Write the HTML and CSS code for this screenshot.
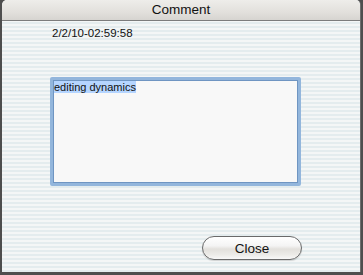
FILE: index.html
```html
<!DOCTYPE html>
<html>
<head>
<meta charset="utf-8">
<link rel="stylesheet" href="styles.css">
</head>
<body>
<div class="window">
  <div class="titlebar">Comment</div>
  <div class="content">
    <div class="stamp">2/2/10-02:59:58</div>
    <div class="field"><div class="field-inner"><span class="sel">editing dynamics</span></div></div>
    <div class="actions"><button class="btn">Close</button></div>
  </div>
</div>
</body>
</html>
```
FILE: styles.css
```css
html, body {
  margin: 0;
  padding: 0;
  width: 363px;
  height: 275px;
  overflow: hidden;
  background: #4e4e4e;
  font-family: "Liberation Sans", Arial, sans-serif;
}
.window {
  margin-left: 2px;
  width: 358px;
  height: 272px;
  display: flex;
  flex-direction: column;
  border-radius: 5px 5px 0 0;
  overflow: hidden;
  border-right: 1px solid #6e6e6e;
  background: repeating-linear-gradient(to bottom, #f4f6f6 0, #f4f6f6 2px, #e4ecee 2px, #e4ecee 4px);
}
.titlebar {
  height: 21px;
  flex: none;
  box-sizing: border-box;
  border-bottom: 1px solid #7c7c7c;
  background: linear-gradient(to bottom, #eeedea 0%, #e2e0dc 60%, #d6d4d0 100%);
  text-align: center;
  font-size: 13.5px;
  line-height: 20px;
  color: #111;
}
.content {
  flex: 1;
  display: flex;
  flex-direction: column;
  padding: 0 0 0 48px;
}
.stamp {
  font-size: 11.5px;
  color: #111;
  margin-top: 6px;
  padding-left: 2px;
  line-height: 13px;
}
.field {
  margin-top: 37px;
  width: 251px;
  height: 109px;
  box-sizing: border-box;
  border: 3px solid #93b6dc;
  border-radius: 2px;
  box-shadow: inset 0 0 0 1px #6f95c2;
  padding: 1px;
}
.field-inner {
  height: 100%;
  background: #f8f8f8;
  padding: 0;
  font-size: 11px;
  line-height: 13px;
  color: #111;
}
.sel {
  background: #b5d5ff;
}
.actions {
  margin-top: 50px;
  padding-left: 152px;
}
.btn {
  width: 100px;
  height: 24px;
  border: 1px solid #6a6a6a;
  border-radius: 12px;
  background: linear-gradient(to bottom, #ffffff 0%, #f4f4f4 40%, #e2e0dc 55%, #ecebe8 80%, #f8f8f8 100%);
  font-family: "Liberation Sans", Arial, sans-serif;
  font-size: 13.5px;
  color: #111;
  padding: 0;
  box-shadow: 0 1px 1px rgba(0,0,0,0.15);
}
```
